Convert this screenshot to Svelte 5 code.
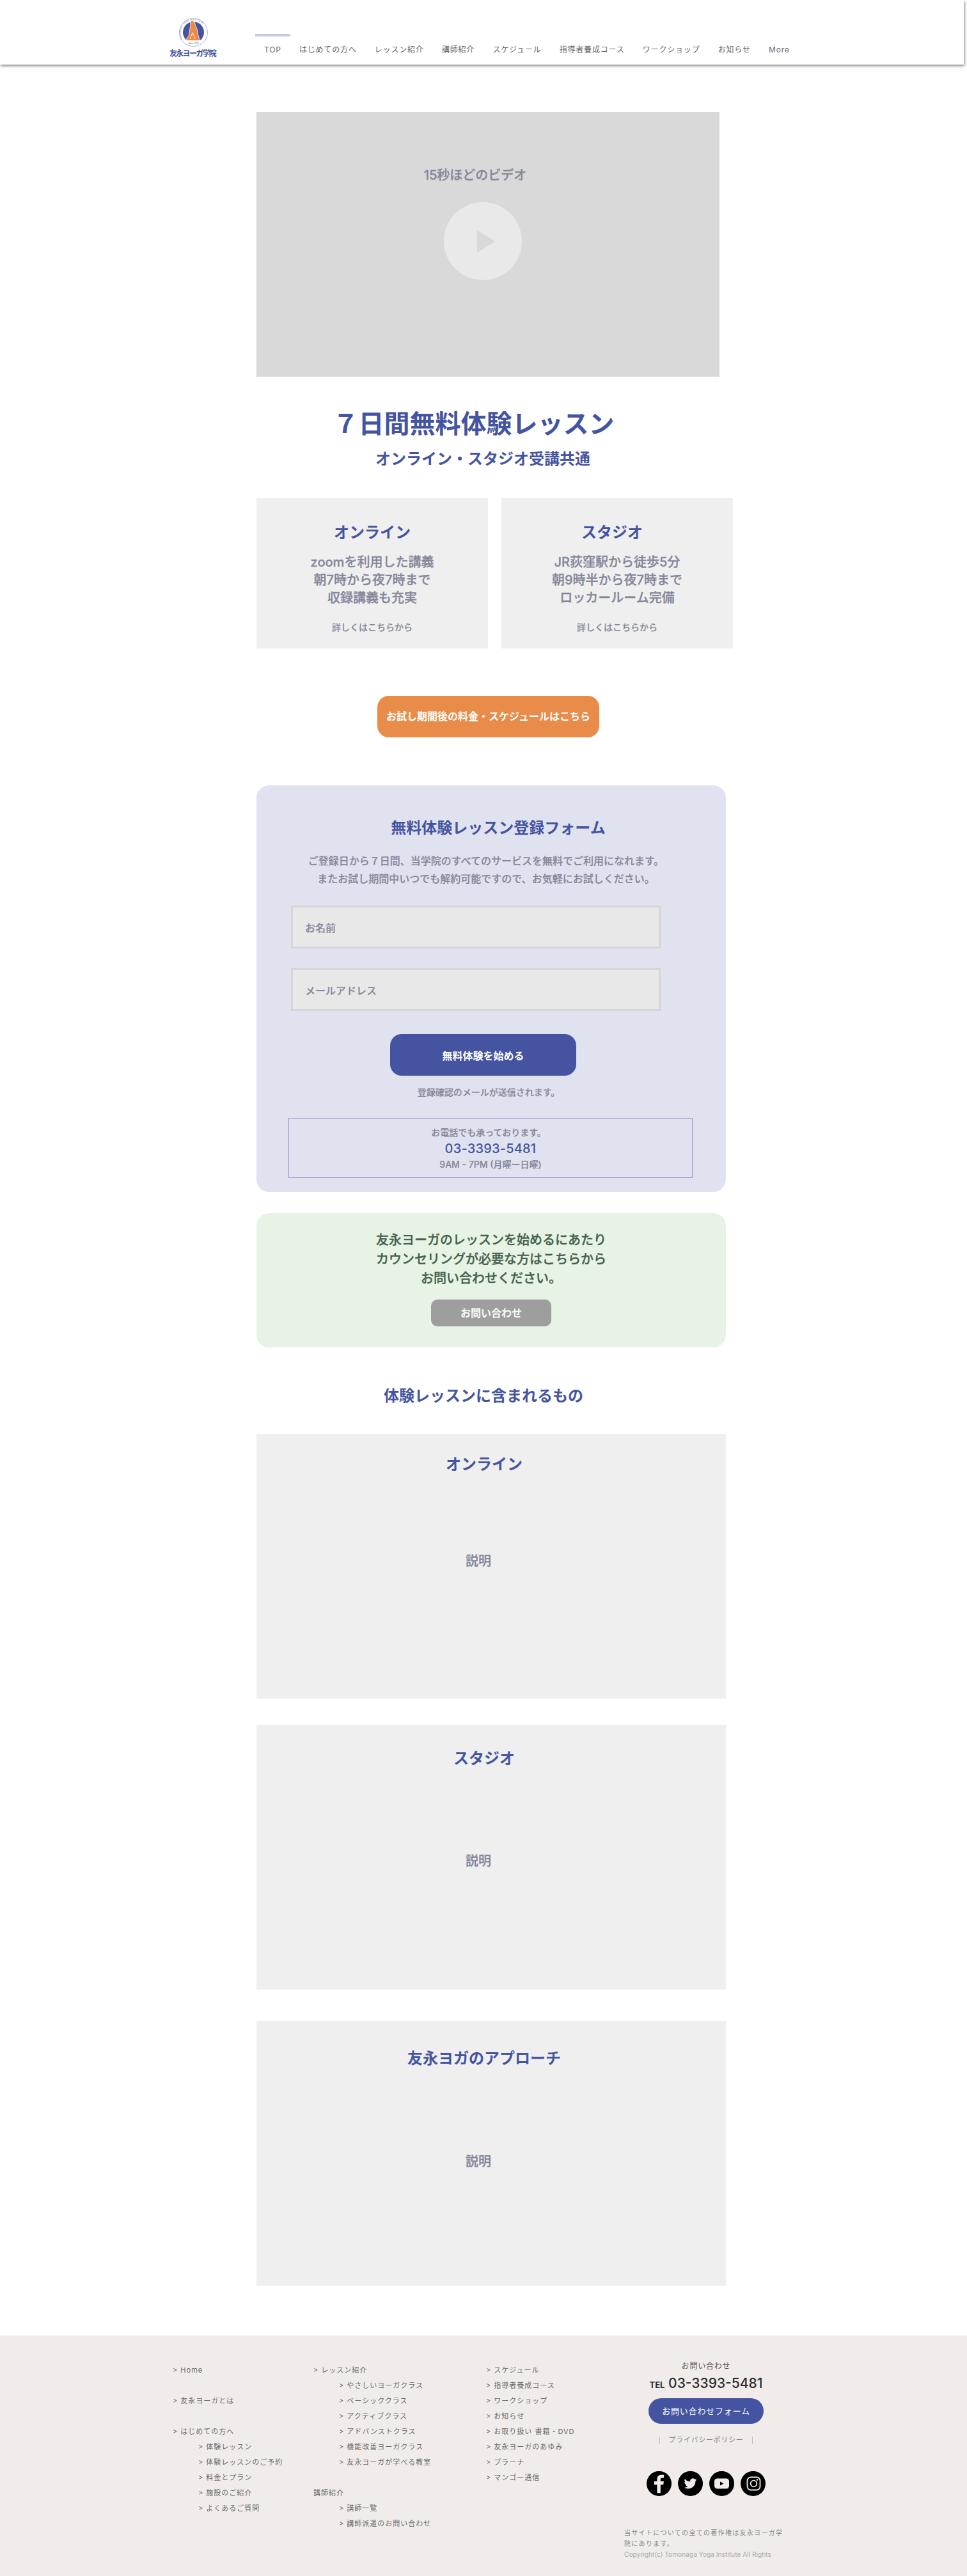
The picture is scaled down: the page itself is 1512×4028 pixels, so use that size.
<script>
  const navItems = ['TOP', 'はじめての方へ', 'レッスン紹介', '講師紹介', 'スケジュール', '指導者養成コース', 'ワークショップ', 'お知らせ', 'More'];
  const trialCards = [
    { title: 'オンライン', lines: ['zoomを利用した講義', '朝7時から夜7時まで', '収録講義も充実'], shift: 'left' },
    { title: 'スタジオ', lines: ['JR荻窪駅から徒歩5分', '朝9時半から夜7時まで', 'ロッカールーム完備'], shift: 'right' },
  ];
  const panels = [
    { title: 'オンライン', cls: 'p1' },
    { title: 'スタジオ', cls: 'p2' },
    { title: '友永ヨガのアプローチ', cls: 'p3' },
  ];
  const guide = ['やさしいヨーガクラス', 'ベーシッククラス', 'アクティブクラス', 'アドバンストクラス', '機能改善ヨーガクラス', '友永ヨーガが学べる教室'];
  const firstTime = ['体験レッスン', '体験レッスンのご予約', '料金とプラン', '施設のご紹介', 'よくあるご質問'];
  const teachers = ['講師一覧', '講師派遣のお問い合わせ'];
  const misc = ['スケジュール', '指導者養成コース', 'ワークショップ', 'お知らせ', 'お取り扱い 書籍・DVD', '友永ヨーガのあゆみ', 'プラーナ', 'マンゴー通信'];
</script>

<header class="site-header">
  <div class="logo">
    <svg width="45" height="45" viewBox="0 0 45 45">
      <circle cx="22.5" cy="22.5" r="22" fill="#fff" stroke="#9aa3cc" stroke-width=".8" />
      <circle cx="22.5" cy="22.5" r="16.5" fill="#4454a0" />
      <defs>
        <path id="ring" d="M6 35A20 20 0 1 1 39 35" />
      </defs>
      <text class="ring-text"><textPath href="#ring" startOffset="2%">TOMONAGA YOGA INSTITUTE</textPath></text>
      <path d="M9 34.500h27a17 17 0 0 1-27 0z" fill="#fff" />
      <path d="M20 4.500c3 0 5 2 5 5 0 2 1 3 2 5 2 4 2 9 3 13 1 3 2 5 2 8H11c0-3 2-5 4-7 1-4 1-8 2-11 0-3 1-4 1-6-1-3 0-7 2-7z" fill="#e98c4a" stroke="#fff" stroke-width=".8" />
      <path d="M17 33l4-10 4 10" stroke="#fff" stroke-width=".8" fill="none" />
      <text x="22.500" y="41" class="since">Since 1974</text>
    </svg>
    <span class="logo-name">友永ヨーガ学院</span>
  </div>
  <nav class="nav">
    <i class="nav-mark"></i>
    {#each navItems as item}
      <a class="nav-item">{item}</a>
    {/each}
  </nav>
</header>

<main class="main">
  <section class="video">
    <p class="video-label">15秒ほどのビデオ</p>
    <div class="play">
      <svg width="28" height="35" viewBox="0 0 28 35"><path d="M0 0l28 17.500L0 35z" fill="#d9d9d9" /></svg>
    </div>
  </section>

  <h1 class="hero-title">７日間無料体験レッスン</h1>
  <h2 class="hero-sub">オンライン・スタジオ受講共通</h2>

  <div class="cards">
    {#each trialCards as card}
      <article class="card">
        <h3 class="card-title {card.shift}">{card.title}</h3>
        <p class="card-lines">
          {#each card.lines as line}
            <span>{line}</span>
          {/each}
        </p>
        <a class="card-more">詳しくはこちらから</a>
      </article>
    {/each}
  </div>

  <a class="orange-btn">お試し期間後の料金・スケジュールはこちら</a>

  <section class="form-box">
    <h2 class="form-title">無料体験レッスン登録フォーム</h2>
    <p class="form-desc">
      ご登録日から７日間、当学院のすべてのサービスを無料でご利用になれます。<br />
      またお試し期間中いつでも解約可能ですので、お気軽にお試しください。
    </p>
    <div class="field">お名前</div>
    <div class="field second">メールアドレス</div>
    <button class="start-btn">無料体験を始める</button>
    <p class="form-note">登録確認のメールが送信されます。</p>
    <div class="phone-box">
      <span class="phone-top">お電話でも承っております。</span>
      <strong class="phone-num">03-3393-5481</strong>
      <span class="phone-hours">9AM - 7PM (月曜ー日曜)</span>
    </div>
  </section>

  <section class="counsel">
    <p>友永ヨーガのレッスンを始めるにあたり<br />カウンセリングが必要な方はこちらから<br />お問い合わせください。</p>
    <a class="counsel-btn">お問い合わせ</a>
  </section>

  <h2 class="includes">体験レッスンに含まれるもの</h2>

  {#each panels as panel}
    <section class="panel {panel.cls}">
      <h3 class="panel-title">{panel.title}</h3>
      <p class="panel-text">説明</p>
    </section>
  {/each}
</main>

<footer class="footer">
  <div class="foot-col col-a">
    <a class="gt">&gt; Home</a>
    <a class="gt spaced">&gt; 友永ヨーガとは</a>
    <a class="gt spaced">&gt; はじめての方へ</a>
    {#each firstTime as t}
      <a class="gt sub">&gt; {t}</a>
    {/each}
  </div>
  <div class="foot-col col-b">
    <a class="gt">&gt; レッスン紹介</a>
    {#each guide as t}
      <a class="gt sub">&gt; {t}</a>
    {/each}
    <a class="gt spaced">講師紹介</a>
    {#each teachers as t}
      <a class="gt sub">&gt; {t}</a>
    {/each}
  </div>
  <div class="foot-col col-c">
    {#each misc as t}
      <a class="gt">&gt; {t}</a>
    {/each}
  </div>
  <div class="foot-contact">
    <div class="contact-center">
      <span class="contact-head">お問い合わせ</span>
      <div class="tel"><small>TEL</small> 03-3393-5481</div>
      <a class="contact-btn">お問い合わせフォーム</a>
      <a class="privacy">プライバシーポリシー</a>
      <div class="social">
        <span class="soc">
          <svg viewBox="0 0 24 24" width="39" height="39"><path d="M13.400 21v-7.900h2.700l.5-3.200h-3.200V8c0-.9.3-1.600 1.600-1.600h1.700V3.600c-.3 0-1.300-.1-2.400-.1-2.500 0-4.200 1.500-4.200 4.300v2.100H7.300v3.200h2.800V21z" fill="#f1ece9" /></svg>
        </span>
        <span class="soc">
          <svg viewBox="-11.500 -11.500 47 47" width="39" height="39"><path d="M23.953 4.570a10 10 0 01-2.825.775 4.958 4.958 0 002.163-2.723c-.951.555-2.005.959-3.127 1.184a4.920 4.920 0 00-8.384 4.482C7.690 8.095 4.067 6.130 1.640 3.162a4.822 4.822 0 00-.666 2.475c0 1.710.870 3.213 2.188 4.096a4.904 4.904 0 01-2.228-.616v.060a4.923 4.923 0 003.946 4.827 4.996 4.996 0 01-2.212.085 4.936 4.936 0 004.604 3.417 9.867 9.867 0 01-6.102 2.105c-.390 0-.779-.023-1.170-.067a13.995 13.995 0 007.557 2.209c9.053 0 13.998-7.496 13.998-13.985 0-.210 0-.420-.015-.630A9.935 9.935 0 0024 4.590z" fill="#f1ece9" /></svg>
        </span>
        <span class="soc">
          <svg viewBox="0 0 39 39" width="39" height="39"><rect x="8" y="11.500" width="23" height="16" rx="4.500" fill="#f1ece9" /><path d="M17 16.500l5.500 3-5.500 3z" fill="#000" /></svg>
        </span>
        <span class="soc">
          <svg viewBox="0 0 39 39" width="39" height="39" fill="none" stroke="#f1ece9"><rect x="10.500" y="9.500" width="20" height="20" rx="5.500" stroke-width="1.800" /><circle cx="20.500" cy="19.500" r="4.800" stroke-width="1.800" /><circle cx="26" cy="13.500" r="1.300" fill="#f1ece9" stroke="none" /></svg>
        </span>
      </div>
    </div>
    <p class="copy">当サイトについての全ての著作権は友永ヨーガ学院にあります。<br /><span>Copyright(c) Tomonaga Yoga Institute All Rights</span></p>
  </div>
</footer>

<style>
  :global(body) {
    margin: 0;
    background: #fff;
    font-family: Inter, "Noto Sans CJK JP", sans-serif;
  }

  h1, h2, h3, p {
    margin: 0;
  }

  /* header */
  .site-header {
    position: relative;
    width: 1507px;
    height: 101px;
    box-sizing: border-box;
    padding-left: 265px;
    display: flex;
    background: #fff;
    box-shadow: 1px 2px 4px rgba(0, 0, 0, 0.5);
  }

  .logo {
    width: 134px;
    padding-top: 28px;
  }

  .logo svg {
    display: block;
    margin-left: 15px;
  }

  .ring-text {
    font-size: 3.300px;
    letter-spacing: 0.450px;
    fill: #4454a0;
    font-family: "Liberation Sans", sans-serif;
  }

  .since {
    font-size: 3.200px;
    text-anchor: middle;
    fill: #4454a0;
    font-family: "Liberation Sans", sans-serif;
  }

  .logo-name {
    display: block;
    margin-top: 3px;
    font-size: 12px;
    line-height: 15px;
    letter-spacing: -1.700px;
    font-weight: 700;
    color: #3e4f9c;
    white-space: nowrap;
  }

  .nav {
    position: relative;
    display: flex;
    gap: 28.300px;
    padding: 69px 0 0 14px;
    align-items: flex-start;
  }

  .nav-mark {
    position: absolute;
    left: 0;
    top: 53px;
    width: 55px;
    height: 4px;
    background: #c5cbe3;
  }

  .nav-item {
    font-size: 12px;
    line-height: 18px;
    letter-spacing: 0.800px;
    color: #666;
    white-space: nowrap;
  }

  /* main column */
  .main {
    width: 749px;
    height: 3551px;
    margin-left: 401px;
    padding-top: 74px;
    box-sizing: border-box;
    color: #84879a;
  }

  .video {
    width: 724px;
    height: 414px;
    background: #d9d9d9;
    box-sizing: border-box;
    padding-top: 84px;
    display: flex;
    flex-direction: column;
    align-items: center;
  }

  .video-label {
    font-size: 20px;
    line-height: 30px;
    font-weight: 500;
    margin-right: 40px;
    -webkit-text-stroke: 0.300px currentColor;
  }

  .play {
    width: 122px;
    height: 122px;
    margin: 27px 16px 0 0;
    border-radius: 50%;
    background: #e9e9e9;
    display: flex;
    align-items: center;
    justify-content: center;
  }

  .play svg {
    margin-left: 10px;
  }

  .hero-title {
    width: 679px;
    margin-top: 48px;
    font-size: 40px;
    line-height: 52px;
    font-weight: 700;
    text-align: center;
    color: #4454a0;
  }

  .hero-sub {
    width: 708px;
    margin-top: 13px;
    font-size: 24px;
    line-height: 32px;
    font-weight: 700;
    text-align: center;
    color: #4454a0;
  }

  .cards {
    display: flex;
    gap: 21px;
    margin-top: 45px;
  }

  .card {
    width: 362px;
    height: 235px;
    background: #efefef;
    box-sizing: border-box;
    padding-top: 36px;
    display: flex;
    flex-direction: column;
    align-items: center;
    text-align: center;
  }

  .card-title {
    font-size: 24px;
    line-height: 36px;
    font-weight: 700;
    color: #4454a0;
  }

  .card-title.right {
    margin-right: 16px;
  }

  .card-lines {
    margin-top: 14px;
    font-size: 20px;
    line-height: 28px;
    font-weight: 500;
    -webkit-text-stroke: 0.300px currentColor;
  }

  .card-lines span {
    display: block;
  }

  .card-more {
    margin-top: 22px;
    font-size: 14px;
    line-height: 20px;
    font-weight: 500;
    -webkit-text-stroke: 0.200px currentColor;
  }

  .orange-btn {
    display: block;
    width: 347px;
    height: 65px;
    margin: 74px 0 0 189px;
    border-radius: 18px;
    background: #e98c4a;
    color: #fff;
    font-size: 16px;
    line-height: 65px;
    font-weight: 700;
    text-align: center;
  }

  .form-box {
    width: 734px;
    height: 636px;
    margin-top: 75px;
    box-sizing: border-box;
    padding: 50px 0 0 54px;
    background: #e0e2ef;
    border-radius: 20px;
  }

  .form-title {
    width: 648px;
    font-size: 24px;
    line-height: 34px;
    font-weight: 700;
    color: #4454a0;
    text-align: center;
  }

  .form-desc {
    width: 610px;
    margin-top: 20px;
    font-size: 16px;
    line-height: 28px;
    font-weight: 500;
    text-align: center;
    -webkit-text-stroke: 0.200px currentColor;
  }

  .field {
    width: 578px;
    height: 67px;
    box-sizing: border-box;
    margin-top: 28px;
    padding: 18px 0 0 19px;
    background: #e8e8e8;
    border: 3px solid #d6d6d6;
    font-size: 16px;
    line-height: 28px;
    font-weight: 500;
    -webkit-text-stroke: 0.200px currentColor;
  }

  .field.second {
    margin-top: 31px;
  }

  .start-btn {
    display: block;
    width: 291px;
    height: 65px;
    margin: 36px 0 0 155px;
    border: 0;
    border-radius: 18px;
    background: #4454a0;
    color: #fff;
    font: 700 16px Inter, "Noto Sans CJK JP", sans-serif;
  }

  .form-note {
    width: 618px;
    margin-top: 16px;
    font-size: 14px;
    line-height: 20px;
    font-weight: 500;
    text-align: center;
    -webkit-text-stroke: 0.200px currentColor;
  }

  .phone-box {
    width: 632px;
    height: 94px;
    box-sizing: border-box;
    margin: 30px 0 0 -4px;
    border: 1px solid #8f99cc;
    display: flex;
    flex-direction: column;
    align-items: center;
    padding-top: 12px;
  }

  .phone-top, .phone-hours {
    font-size: 14px;
    line-height: 20px;
    font-weight: 500;
    -webkit-text-stroke: 0.200px currentColor;
  }

  .phone-top {
    margin-right: 6px;
  }

  .phone-num {
    font-size: 20px;
    line-height: 30px;
    font-weight: 500;
    color: #4454a0;
    letter-spacing: 0.200px;
  }

  .counsel {
    width: 734px;
    height: 210px;
    margin-top: 33px;
    box-sizing: border-box;
    padding-top: 27px;
    background: #e6f3e5;
    border-radius: 20px;
    display: flex;
    flex-direction: column;
    align-items: center;
    text-align: center;
    color: #44614a;
  }

  .counsel p {
    font-size: 20px;
    line-height: 30px;
    font-weight: 500;
    -webkit-text-stroke: 0.300px currentColor;
  }

  .counsel-btn {
    width: 188px;
    height: 42px;
    margin-top: 18px;
    border-radius: 10px;
    background: #9e9e9e;
    color: #fff;
    font-size: 16px;
    line-height: 42px;
    font-weight: 500;
    -webkit-text-stroke: 0.300px currentColor;
  }

  .includes {
    width: 710px;
    margin-top: 58px;
    font-size: 24px;
    line-height: 36px;
    font-weight: 700;
    color: #4454a0;
    text-align: center;
  }

  .panel {
    width: 734px;
    height: 414px;
    margin-top: 41px;
    box-sizing: border-box;
    background: #efefef;
    display: flex;
    flex-direction: column;
    align-items: center;
    padding-top: 30px;
  }

  .p2 {
    padding-top: 35px;
  }

  .p3 {
    margin-top: 49px;
    padding-top: 41px;
  }

  .panel-title {
    font-size: 24px;
    line-height: 36px;
    font-weight: 700;
    color: #4454a0;
    margin-right: 22px;
  }

  .panel-text {
    margin: 118px 40px 0 0;
    font-size: 20px;
    line-height: 30px;
    font-weight: 500;
    -webkit-text-stroke: 0.300px currentColor;
  }

  .p2 .panel-text {
    margin-top: 127px;
  }

  .p3 .panel-text {
    margin-top: 128px;
  }

  /* footer */
  .footer {
    height: 376px;
    box-sizing: border-box;
    background: #f1ece9;
    padding: 42px 0 0 270px;
    display: flex;
    color: #6a6a6a;
    font-size: 11px;
  }

  .foot-col {
    display: flex;
    flex-direction: column;
  }

  .col-a {
    width: 220px;
  }

  .col-b {
    width: 270px;
  }

  .col-c {
    width: 216px;
  }

  .gt {
    line-height: 24px;
    letter-spacing: 1px;
    white-space: nowrap;
  }

  .spaced {
    margin-top: 24px;
  }

  .sub {
    margin-left: 40px;
  }

  .foot-contact {
    width: 260px;
  }

  .contact-center {
    width: 190px;
    margin: -2px 0 0 33px;
    display: flex;
    flex-direction: column;
    align-items: center;
  }

  .contact-head {
    font-size: 12px;
    line-height: 16px;
    letter-spacing: 0.800px;
    color: #555;
  }

  .tel {
    margin-top: 3px;
    font-size: 21px;
    line-height: 32px;
    font-weight: 500;
    color: #2b2b2b;
    white-space: nowrap;
  }

  .tel small {
    font-size: 13px;
    font-weight: 700;
  }

  .contact-btn {
    width: 180px;
    height: 40px;
    margin-top: 5px;
    border-radius: 20px;
    background: #4454a0;
    color: #fff;
    text-align: center;
    font-size: 13px;
    line-height: 40px;
    letter-spacing: 0.800px;
  }

  .privacy {
    width: 144px;
    height: 11px;
    margin-top: 20px;
    text-align: center;
    font-size: 11px;
    line-height: 11px;
    letter-spacing: 0.700px;
    color: #888;
    border-left: 1px solid #bbb;
    border-right: 1px solid #bbb;
  }

  .social {
    display: flex;
    gap: 10px;
    margin-top: 43px;
  }

  .soc {
    width: 39px;
    height: 39px;
    border-radius: 50%;
    background: #000;
    display: block;
  }

  .soc svg {
    display: block;
  }

  .copy {
    width: 252px;
    margin-top: 49px;
    font-size: 10px;
    line-height: 17px;
    letter-spacing: 1.300px;
    color: #888;
  }

  .copy span {
    letter-spacing: 0;
    font-size: 10.200px;
    color: #aaa;
    white-space: nowrap;
  }
</style>
